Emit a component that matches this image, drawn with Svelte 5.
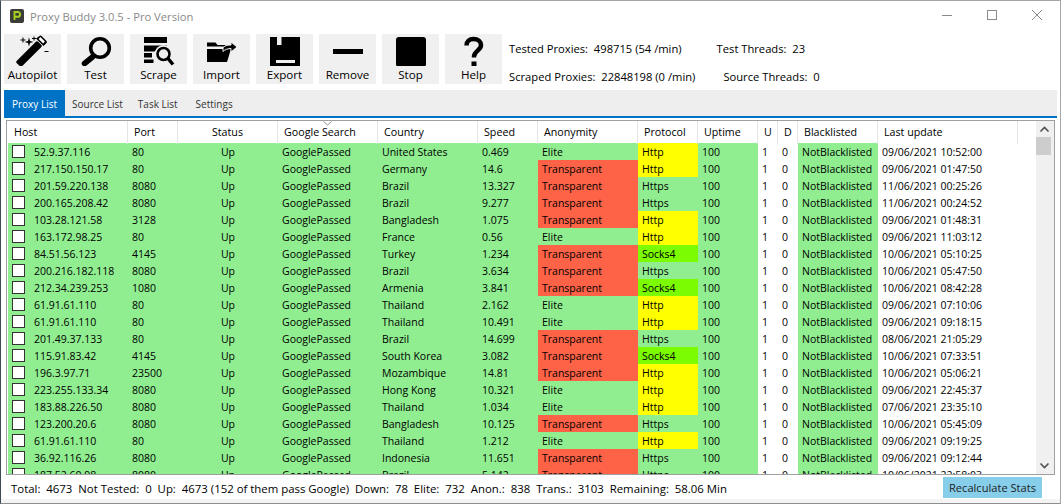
<script>
  const raw = `52.9.37.116|80|United States|0.469|E|Http|09/06/2021 10:52:00
217.150.150.17|80|Germany|14.6|T|Http|09/06/2021 01:47:50
201.59.220.138|8080|Brazil|13.327|T|Https|11/06/2021 00:25:26
200.165.208.42|8080|Brazil|9.277|T|Https|11/06/2021 00:24:52
103.28.121.58|3128|Bangladesh|1.075|T|Http|09/06/2021 01:48:31
163.172.98.25|80|France|0.56|E|Http|09/06/2021 11:03:12
84.51.56.123|4145|Turkey|1.234|T|Socks4|10/06/2021 05:10:25
200.216.182.118|8080|Brazil|3.634|T|Https|10/06/2021 05:47:50
212.34.239.253|1080|Armenia|3.841|T|Socks4|10/06/2021 08:42:28
61.91.61.110|80|Thailand|2.162|E|Http|09/06/2021 07:10:06
61.91.61.110|80|Thailand|10.491|E|Http|09/06/2021 09:18:15
201.49.37.133|80|Brazil|14.699|T|Https|08/06/2021 21:05:29
115.91.83.42|4145|South Korea|3.082|T|Socks4|10/06/2021 07:33:51
196.3.97.71|23500|Mozambique|14.81|T|Http|10/06/2021 05:06:21
223.255.133.34|8080|Hong Kong|10.321|E|Http|09/06/2021 22:45:37
183.88.226.50|8080|Thailand|1.034|E|Http|07/06/2021 23:35:10
123.200.20.6|8080|Bangladesh|10.125|T|Https|10/06/2021 05:45:09
61.91.61.110|80|Thailand|1.212|E|Http|09/06/2021 09:19:25
36.92.116.26|8080|Indonesia|11.651|T|Https|09/06/2021 09:12:44
187.52.60.98|8080|Brazil|5.142|T|Https|10/06/2021 22:58:03`;
  const rows = raw.split('\n').map((l) => {
    const [host, port, country, speed, anon, proto, date] = l.split('|');
    return { host, port, country, speed, anon, proto, date };
  });
  const headers = ['Host','Port','Status','Google Search','Country','Speed','Anonymity','Protocol','Uptime','U','D','Blacklisted','Last update'];
  const tabs = ['Proxy List','Source List','Task List','Settings'];
  const tools = ['Autopilot','Test','Scrape','Import','Export','Remove','Stop','Help'];
</script>

<div class="win">
  <header class="title">
    <svg class="logo" width="14" height="14" viewBox="0 0 14 14">
      <rect width="14" height="14" rx="2" fill="#3a3d38"/>
      <path d="M4.500 11V3h3.200a2.300 2.300 0 0 1 0 4.800H4.500" fill="none" stroke="#a6d11f" stroke-width="1.900"/>
    </svg>
    <span class="title-text">Proxy Buddy 3.0.5 - Pro Version</span>
    <div class="controls">
      <svg width="10" height="10" viewBox="0 0 10 10"><path d="M0 5.500h10" stroke="#8a8a8a"/></svg>
      <svg width="10" height="10" viewBox="0 0 10 10"><rect x=".5" y=".5" width="9" height="9" fill="none" stroke="#8a8a8a"/></svg>
      <svg width="10" height="10" viewBox="0 0 10 10"><path d="M0 0l10 10M10 0L0 10" stroke="#8a8a8a"/></svg>
    </div>
  </header>

  <section class="toolbar">
    {#each tools as t}
      <button class="tool">
        <svg width="57" height="32" viewBox="0 0 57 32">
          {#if t === 'Autopilot'}
            <path d="M17 31.500l-3.500-3.500L33 8.500l3.500 3.500z" stroke="#000" stroke-width="2.500" stroke-linejoin="round"/>
            <path d="M32 4.500l7.500 7.500 3-3a1.500 1.500 0 0 0 0-2l-5-5a1.500 1.500 0 0 0-2 0z" fill="#000"/>
            <path d="M35.500 4l4.500 4.500" stroke="#fff" stroke-width="2.500"/>
            <path d="M25 3.500l1 3.500 3.500 1-3.500 1-1 3.500-1-3.500-3.500-1 3.500-1z" fill="#000"/>
            <path d="M19 3.500v5M16.500 6h5M30 2.500v4M28 4.500h4M40.500 17.500h4" stroke="#000"/>
          {:else if t === 'Test'}
            <circle cx="33" cy="14" r="9.300" fill="none" stroke="#000" stroke-width="3.600"/>
            <path d="M25.500 23L17.500 29.500" stroke="#000" stroke-width="5.500" stroke-linecap="round"/>
          {:else if t === 'Scrape'}
            <rect x="14" y="3" width="23" height="6" fill="#000"/>
            <rect x="14" y="11.500" width="23" height="6" fill="#000"/>
            <rect x="14" y="19" width="8" height="4.500" fill="#000"/>
            <rect x="14" y="25.500" width="9.500" height="3.500" fill="#000"/>
            <circle cx="33.500" cy="20" r="9" fill="#f0f0f0"/>
            <circle cx="33.500" cy="20" r="6" fill="none" stroke="#000" stroke-width="2.600"/>
            <path d="M38 24.500L43 30.500" stroke="#000" stroke-width="3.500"/>
          {:else if t === 'Import'}
            <path d="M14 10.500V8.500h8.500l2 2.500h8v1.500H14z" fill="#000"/>
            <path d="M14 15h24l-4 13H14z" fill="#000"/>
            <path d="M30 15c0-2.500 3-4 8-4V8l6 5-6 5v-3.500c-3 0-6 1-8 3z" fill="#000" stroke="#f0f0f0"/>
          {:else if t === 'Export'}
            <path d="M14 3h30v30H14z" fill="#000"/>
            <rect x="21" y="3" width="4.500" height="8" fill="#f0f0f0"/>
            <rect x="20" y="26" width="19" height="3" fill="#f0f0f0"/>
          {:else if t === 'Remove'}
            <rect x="14" y="15" width="30" height="5" fill="#000"/>
          {:else if t === 'Stop'}
            <rect x="14" y="3" width="30" height="30" rx="3" fill="#000"/>
          {:else}
            <path d="M21.500 11.500c0-4 3-6.500 7-6.500 4.500 0 7.500 2.500 7.500 6.300 0 5-7 5.700-7 11.200v1" fill="none" stroke="#000" stroke-width="4.500"/>
            <rect x="26.500" y="27.500" width="5" height="4.500" fill="#000"/>
          {/if}
        </svg>
        <span>{t}</span>
      </button>
    {/each}
    <div class="stats">
      <div class="stat-row r1"><span>Tested Proxies:  498715 (54 /min)</span><span>Test Threads:  23</span></div>
      <div class="stat-row r2"><span>Scraped Proxies:  22848198 (0 /min)</span><span>Source Threads:  0</span></div>
    </div>
  </section>

  <nav class="tabs">
    {#each tabs as t, i}
      <span class="tab" class:active={i === 0}>{t}</span>
    {/each}
  </nav>

  <section class="table">
    <div class="content">
      <div class="head grid">
        {#each headers as h}
          <div class="th" class:center={h === 'Status'}>
            {#if h === 'Google Search'}
              <svg class="sort" width="9" height="5" viewBox="0 0 9 5"><path d="M.5.5l4 3.500 4-3.500" fill="none" stroke="#8f8f8f"/></svg>
            {/if}
            {h}
          </div>
        {/each}
      </div>
      <div class="body">
        {#each rows as r}
          <div class="row grid">
            <div class="td g host"><i class="check"></i>{r.host}</div>
            <div class="td g">{r.port}</div>
            <div class="td g center">Up</div>
            <div class="td g">GooglePassed</div>
            <div class="td g">{r.country}</div>
            <div class="td g">{r.speed}</div>
            <div class="td" class:g={r.anon === 'E'} class:tomato={r.anon === 'T'}>{r.anon === 'E' ? 'Elite' : 'Transparent'}</div>
            <div class="td" class:g={r.proto === 'Https'} class:yellow={r.proto === 'Http'} class:lime={r.proto === 'Socks4'}>{r.proto}</div>
            <div class="td g">100</div>
            <div class="td">1</div>
            <div class="td">0</div>
            <div class="td g">NotBlacklisted</div>
            <div class="td">{r.date}</div>
          </div>
        {/each}
      </div>
    </div>
    <aside class="scroll">
      <svg width="17" height="16" viewBox="0 0 17 16"><path d="M4.500 10.500l4-4 4 4" fill="none" stroke="#505050" stroke-width="1.600"/></svg>
      <div class="thumb"></div>
      <svg class="down" width="17" height="16" viewBox="0 0 17 16"><path d="M4.500 5.500l4 4 4-4" fill="none" stroke="#505050" stroke-width="1.600"/></svg>
    </aside>
  </section>

  <footer class="status">
    <span class="sum">Total:  4673  Not Tested:  0  Up:  4673 (152 of them pass Google)  Down:  78  Elite:  732  Anon.:  838  Trans.:  3103  Remaining:  58.06 Min</span>
    <button class="recalc">Recalculate Stats</button>
  </footer>
</div>

<style>
  :global(body) { margin: 0; background: #fff; }
  .win {
    width: 1061px; height: 504px; box-sizing: border-box; overflow: hidden;
    display: flex; flex-direction: column;
    border-top: 1px solid #a6a6a6; border-left: 1px solid #3c4a58; border-right: 1px solid #a6a6a6; border-bottom: 1px solid #8e8e8e;
    font-family: "Open Sans", "Noto Sans", sans-serif; font-size: 11.2px; color: #000; background: #fff;
  }
  .title { height: 33px; flex: none; display: flex; align-items: center; padding: 0 0 3px 9px; box-sizing: border-box; }
  .logo { margin-right: 6px; }
  .title-text { font-size: 11.2px; color: #8a8a8a; }
  .controls { margin-left: auto; display: flex; gap: 35px; margin-right: 18px; margin-bottom: 2px; }
  .toolbar { height: 50px; flex: none; display: flex; padding-left: 3px; gap: 6px; }
  .tool {
    width: 57px; height: 50px; padding: 0; border: 0; background: #f0f0f0; display: flex; flex-direction: column; align-items: center; color: #000;
    font-family: inherit; font-size: 11.6px;
  }
  .tool svg { display: block; flex: none; }
  .tool span { line-height: 17px; }
  .stats { margin-left: 1px; display: flex; flex-direction: column; gap: 10px; padding-top: 6px; }
  .stat-row { display: flex; white-space: pre; line-height: 18px; }
  .r1 { gap: 35px; }
  .r2 { gap: 28px; }
  .tabs {
    margin: 6px 3px 0 3px; height: 28px; flex: none; box-sizing: border-box; background: #eeeeee; border-bottom: 2px solid #0072c6; display: flex;
  }
  .tab { padding: 0 7px; line-height: 29px; color: #333; font-size: 10px; }
  .tab:nth-child(2) { padding-right: 8px; }
  .tab:nth-child(4) { margin-left: 4px; }
  .tab.active { background: #0072c6; color: #fff; padding: 0 8px; }
  .table {
    margin: 2px 5px 0 5px; height: 355px; flex: none; box-sizing: border-box; border: 1px solid #a0a0a0; display: flex; overflow: hidden; background: #fff; font-size: 10.5px;
  }
  .content { flex: 1; padding-left: 1px; min-width: 0; }
  .grid { display: grid; grid-template-columns: 120px 50px 100px 100px 100px 60px 100px 60px 60px 20px 20px 80px 140px; }
  .head { height: 22px; }
  .th { position: relative; padding-left: 6px; line-height: 23px; border-right: 1px solid #e5e5e5; font-size: 10.7px; }
  .th.center { padding-left: 0; text-align: center; }
  .sort { position: absolute; left: 45px; top: 0; }
  .row { height: 17px; line-height: 19px; }
  .td { padding-left: 4px; white-space: nowrap; overflow: hidden; }
  .td.center { padding-left: 0; text-align: center; }
  .g { background: #90ee90; }
  .tomato { background: #ff6347; }
  .yellow { background: #ffff00; }
  .lime { background: #7cfc00; }
  .host { display: flex; align-items: flex-start; }
  .check { width: 11px; height: 11px; border: 1px solid #333; background: #fff; margin: 2px 9px 0 0; flex: none; }
  .scroll { width: 18px; flex: none; background: #f0f0f0; display: flex; flex-direction: column; }
  .scroll svg { display: block; flex: none; }
  .thumb { width: 15px; height: 18px; background: #cdcdcd; }
  .down { margin-top: auto; }
  .status { flex: 1; display: flex; align-items: flex-start; padding: 2px 18px 0 10px; border-bottom: 4px solid #f4f4f4; }
  .sum { white-space: pre; line-height: 21px; margin-top: 1px; font-size: 11.4px; }
  .recalc { margin-left: auto; width: 99px; height: 21px; padding: 0; border: 0; background: #87ceeb; font-family: inherit; font-size: 11.1px; color: #222; }
</style>
